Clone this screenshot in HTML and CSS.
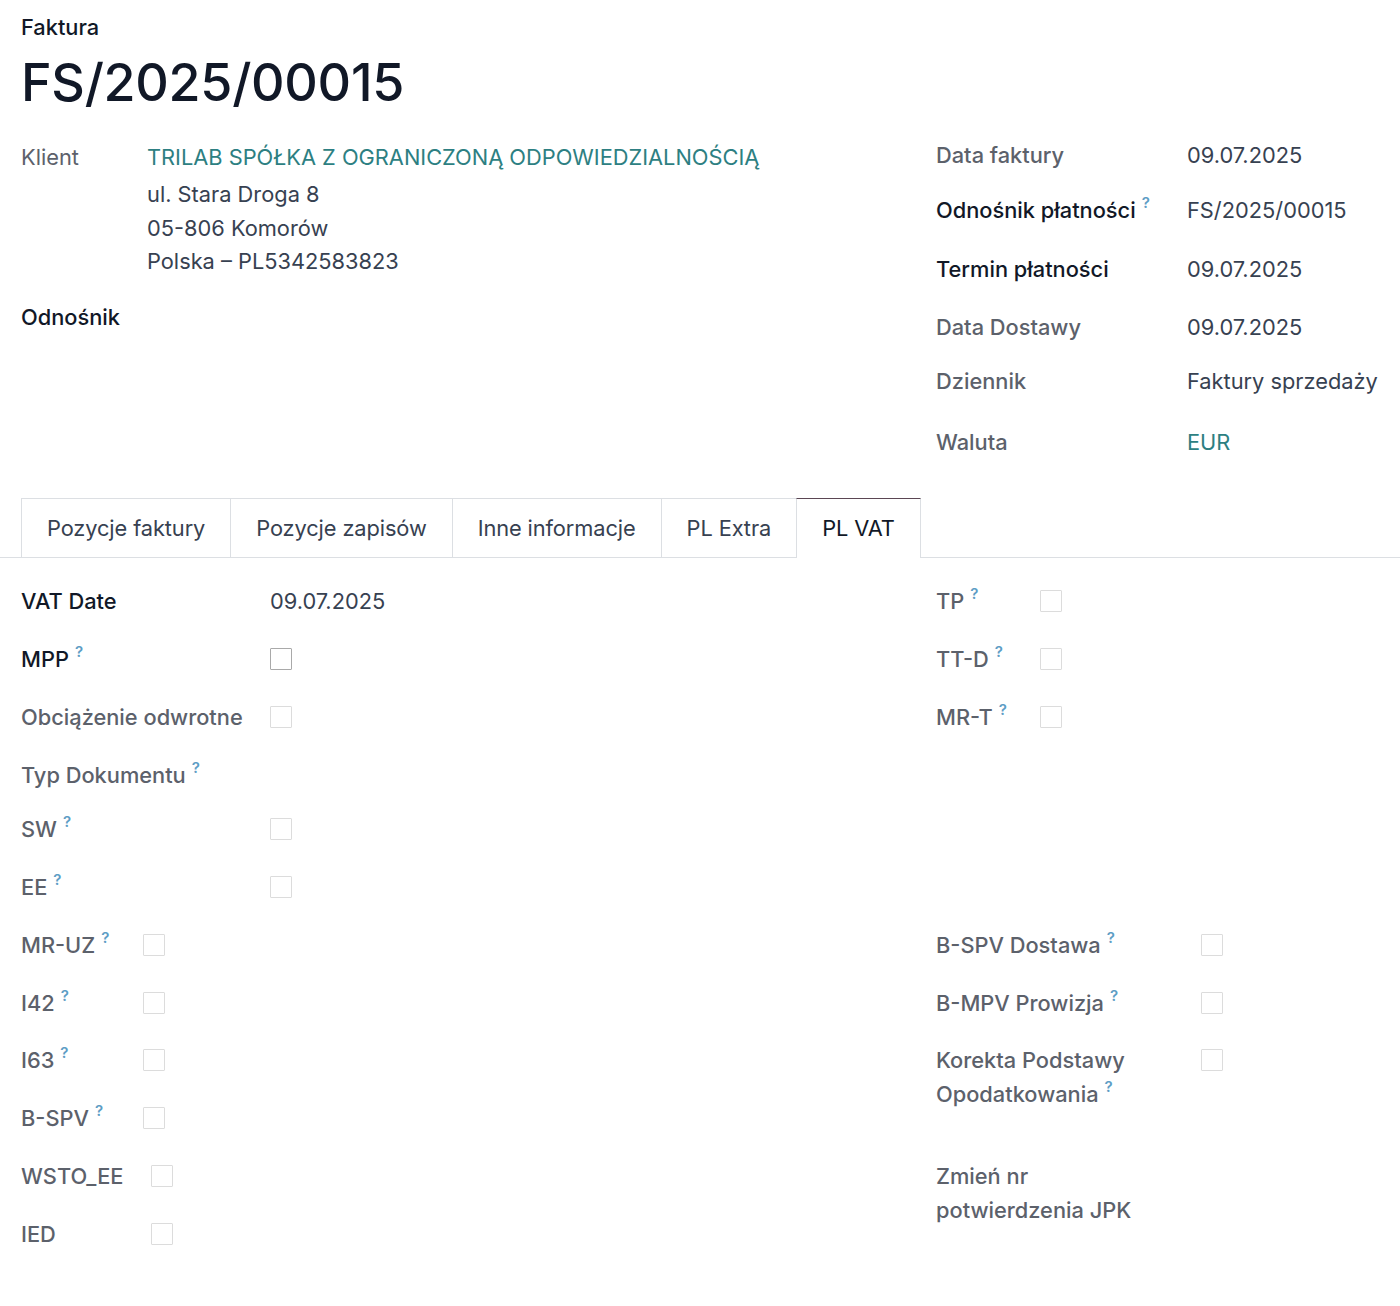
FILE: index.html
```html
<!DOCTYPE html>
<html lang="pl">
<head>
<meta charset="utf-8">
<title>Faktura FS/2025/00015</title>
<link rel="stylesheet" href="styles.css">
</head>
<body>
<div class="sheet">
  <div class="title-block">
    <div class="doc-type">Faktura</div>
    <h1 class="doc-name">FS/2025/00015</h1>
  </div>

  <div class="top-groups">
    <div class="group group-left">
      <div class="row row-client">
        <div class="lbl lbl-plain">Klient</div>
        <div class="val">
          <div class="link">TRILAB SPÓŁKA Z OGRANICZONĄ ODPOWIEDZIALNOŚCIĄ</div>
          <div class="addr">ul. Stara Droga 8</div>
          <div class="addr">05-806 Komorów</div>
          <div class="addr">Polska – PL5342583823</div>
        </div>
      </div>
      <div class="row row-ref">
        <div class="lbl lbl-strong">Odnośnik</div>
        <div class="val"></div>
      </div>
    </div>

    <div class="group group-right">
      <div class="row"><div class="lbl">Data faktury</div><div class="val">09.07.2025</div></div>
      <div class="row"><div class="lbl lbl-strong">Odnośnik płatności<sup class="q">?</sup></div><div class="val">FS/2025/00015</div></div>
      <div class="row"><div class="lbl lbl-strong">Termin płatności</div><div class="val">09.07.2025</div></div>
      <div class="row"><div class="lbl">Data Dostawy</div><div class="val">09.07.2025</div></div>
      <div class="row"><div class="lbl">Dziennik</div><div class="val">Faktury sprzedaży</div></div>
      <div class="row"><div class="lbl">Waluta</div><div class="val link">EUR</div></div>
    </div>
  </div>

  <div class="tabs">
    <div class="tab">Pozycje faktury</div>
    <div class="tab">Pozycje zapisów</div>
    <div class="tab">Inne informacje</div>
    <div class="tab">PL Extra</div>
    <div class="tab tab-active">PL VAT</div>
  </div>

  <div class="pane">
    <div class="section">
      <div class="col col-left lw-250">
        <div class="row"><div class="lbl lbl-strong">VAT Date</div><div class="val">09.07.2025</div></div>
        <div class="row"><div class="lbl lbl-strong">MPP<sup class="q">?</sup></div><div class="val"><span class="cb cb-dark"></span></div></div>
        <div class="row"><div class="lbl">Obciążenie odwrotne</div><div class="val"><span class="cb"></span></div></div>
        <div class="row row-short"><div class="lbl lbl-wide">Typ Dokumentu<sup class="q">?</sup></div></div>
        <div class="row"><div class="lbl">SW<sup class="q">?</sup></div><div class="val"><span class="cb"></span></div></div>
        <div class="row"><div class="lbl">EE<sup class="q">?</sup></div><div class="val"><span class="cb"></span></div></div>
      </div>
      <div class="col col-right lw-104">
        <div class="row"><div class="lbl">TP<sup class="q">?</sup></div><div class="val"><span class="cb"></span></div></div>
        <div class="row"><div class="lbl">TT-D<sup class="q">?</sup></div><div class="val"><span class="cb"></span></div></div>
        <div class="row"><div class="lbl">MR-T<sup class="q">?</sup></div><div class="val"><span class="cb"></span></div></div>
      </div>
    </div>

    <div class="section">
      <div class="col col-left lw-122">
        <div class="row"><div class="lbl">MR-UZ<sup class="q">?</sup></div><div class="val"><span class="cb"></span></div></div>
        <div class="row"><div class="lbl">I42<sup class="q">?</sup></div><div class="val"><span class="cb"></span></div></div>
        <div class="row"><div class="lbl">I63<sup class="q">?</sup></div><div class="val"><span class="cb"></span></div></div>
        <div class="row"><div class="lbl">B-SPV<sup class="q">?</sup></div><div class="val"><span class="cb"></span></div></div>
      </div>
      <div class="col col-right lw-265">
        <div class="row"><div class="lbl">B-SPV Dostawa<sup class="q">?</sup></div><div class="val"><span class="cb"></span></div></div>
        <div class="row"><div class="lbl">B-MPV Prowizja<sup class="q">?</sup></div><div class="val"><span class="cb"></span></div></div>
        <div class="row"><div class="lbl lbl-wrap">Korekta Podstawy Opodatkowania<sup class="q">?</sup></div><div class="val"><span class="cb"></span></div></div>
      </div>
    </div>

    <div class="section">
      <div class="col col-left lw-130">
        <div class="row"><div class="lbl">WSTO_EE</div><div class="val"><span class="cb"></span></div></div>
        <div class="row"><div class="lbl">IED</div><div class="val"><span class="cb"></span></div></div>
      </div>
      <div class="col col-right lw-265">
        <div class="row"><div class="lbl lbl-wrap">Zmień nr potwierdzenia JPK</div><div class="val"></div></div>
      </div>
    </div>
  </div>
</div>
</body>
</html>
```

FILE: styles.css
```css
* { box-sizing: border-box; }

html, body {
  margin: 0;
  padding: 0;
  background: #ffffff;
}

body {
  font-family: "Inter", "Noto Sans", "Liberation Sans", sans-serif;
  font-size: 21.8px;
  color: #111827;
}

.sheet {
  padding: 13px 0 40px 0;
}

.title-block {
  padding: 0 21px;
}

.doc-type {
  font-size: 21.8px;
  line-height: 28px;
  font-weight: 500;
  color: #111827;
}

.doc-name {
  margin: 14px 0 0 0;
  font-size: 52px;
  line-height: 56px;
  font-weight: 500;
  letter-spacing: -0.3px;
  color: #111827;
}

/* ----- top groups ----- */
.top-groups {
  display: grid;
  grid-template-columns: 915px 1fr;
  margin-top: 15px;
  padding-left: 21px;
}

.row {
  display: grid;
  align-items: start;
  line-height: 34px;
  min-height: 57.4px;
  padding: 12px 0 11.4px 0;
}

.group-left .row { grid-template-columns: 126px 1fr; }
.group-right .row { grid-template-columns: 251px 1fr; }

.group-right .row:nth-child(1) { min-height: 55px; padding-bottom: 9px; }
.group-right .row:nth-child(2) { min-height: 59px; padding-bottom: 13px; }
.group-right .row:nth-child(3) { min-height: 58px; padding-bottom: 12px; }
.group-right .row:nth-child(4) { min-height: 54px; padding-bottom: 8px; }
.group-right .row:nth-child(5) { min-height: 61px; padding-bottom: 15px; }

.row-client {
  padding-top: 14px;
  padding-bottom: 10px;
}

.row-client .addr {
  line-height: 33.5px;
  color: #374151;
}

.row-client .link { margin-bottom: 4px; }

.row-ref { padding-top: 11px; }

.lbl {
  color: #5c616b;
  font-weight: 500;
}

.lbl-plain { font-weight: 400; }

.lbl-strong {
  color: #111827;
  font-weight: 500;
}

.val {
  color: #374151;
}

.link {
  color: #2d7f82;
}

.q {
  font-size: 15px;
  line-height: 0;
  color: #5d9dc5;
  font-weight: 600;
  margin-left: 6px;
  vertical-align: 0;
  position: relative;
  top: -10px;
}

/* ----- tabs ----- */
.tabs {
  display: flex;
  margin-top: 28px;
  padding-left: 21px;
  border-bottom: 1px solid #dcdfe3;
}

.tab {
  height: 59px;
  line-height: 58px;
  padding: 0 25px;
  border: 1px solid #dcdfe3;
  border-bottom: none;
  margin-left: -1px;
  letter-spacing: -0.1px;
  color: #374151;
  background: #ffffff;
}

.tab:first-child { margin-left: 0; }

.tab-active {
  color: #111827;
  border-top: 1px solid #5b4654;
  margin-bottom: -1px;
  height: 60px;
}

/* ----- pane ----- */
.pane {
  padding: 14px 0 0 21px;
}

.pane .row {
  min-height: 57.8px;
  padding-bottom: 11.8px;
}

.section {
  display: grid;
  grid-template-columns: 915px 1fr;
}

.col .row { grid-template-columns: var(--lw) 1fr; }

.lw-250 { --lw: 249px; }
.lw-104 { --lw: 104px; }
.lw-122 { --lw: 122px; }
.lw-265 { --lw: 265px; }
.lw-130 { --lw: 130px; }

.pane .row-short {
  min-height: 54.5px;
  padding-bottom: 8.5px;
}

.lbl-wide { grid-column: 1 / span 2; }

.lbl-wrap { max-width: 210px; }

.cb {
  display: block;
  width: 22px;
  height: 22px;
  margin-top: 6px;
  border: 1px solid #dcdcdc;
  border-radius: 1px;
  background: #ffffff;
}

.cb-dark { border-color: #a9a9a9; }
```
